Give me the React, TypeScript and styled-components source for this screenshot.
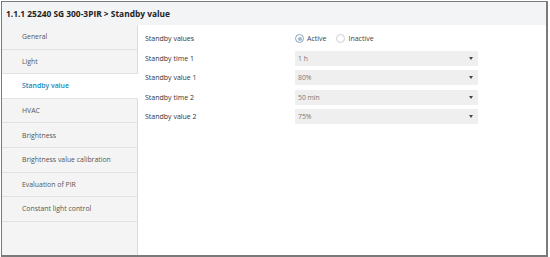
import React from "react";
import styled, { createGlobalStyle } from "styled-components";

const Global = createGlobalStyle`
  html, body { margin: 0; padding: 0; background: #ffffff; }
  body { font-family: "Open Sans", "Noto Sans", sans-serif; }
`;

const Frame = styled.div`
  box-sizing: border-box;
  width: 547px;
  height: 256px;
  margin: 1px 0 0 1px;
  border: 2px solid #7a7a7a;
  border-top-width: 1px;
  border-left-width: 1px;
  display: flex;
  flex-direction: column;
  background: #ffffff;
`;

const Header = styled.div`
  height: 23px;
  flex: none;
  background: #f3f4f5;
  display: flex;
  align-items: center;
  padding-left: 4px;
  font-size: 8.4px;
  font-weight: 700;
  color: #222;
`;

const Body = styled.div`
  flex: 1;
  display: flex;
  min-height: 0;
`;

const Sidebar = styled.div`
  width: 135px;
  flex: none;
  background: #f4f4f4;
  border-right: 1px solid #dcdcdc;
  display: flex;
  flex-direction: column;
`;

const NavItem = styled.div<{ $active?: boolean }>`
  height: 24.6px;
  box-sizing: border-box;
  border-bottom: 1px solid #e2e2e2;
  display: flex;
  align-items: center;
  padding-left: 20px;
  font-size: 6.9px;
  color: ${(p) => (p.$active ? "#1a86b8" : "#555")};
  font-weight: ${(p) => (p.$active ? 600 : 400)};
  background: ${(p) => (p.$active ? "#ffffff" : "transparent")};
  margin-right: ${(p) => (p.$active ? "-1px" : "0")};
`;

const Content = styled.div`
  flex: 1;
  padding: 6px 0 0 7px;
  display: flex;
  flex-direction: column;
  gap: 4.5px;
`;

const Row = styled.div`
  display: grid;
  grid-template-columns: 150px 183px;
  align-items: center;
  height: 15px;
`;

const Label = styled.div`
  font-size: 7px;
  color: #333;
`;

const Radios = styled.div`
  display: flex;
  align-items: center;
  gap: 10px;
  font-size: 7px;
  color: #444;
`;

const RadioOpt = styled.label`
  display: flex;
  align-items: center;
  gap: 3px;
`;

const Circle = styled.span<{ $checked?: boolean }>`
  box-sizing: border-box;
  width: 9px;
  height: 9px;
  border-radius: 50%;
  border: 1px solid ${(p) => (p.$checked ? "#8aa6c0" : "#cfcfcf")};
  background: #fff;
  display: flex;
  align-items: center;
  justify-content: center;
  &::after {
    content: "";
    width: 4px;
    height: 4px;
    border-radius: 50%;
    background: ${(p) => (p.$checked ? "#9fb8cf" : "transparent")};
  }
`;

const Select = styled.div`
  box-sizing: border-box;
  height: 15px;
  background: #efefef;
  display: flex;
  align-items: center;
  justify-content: space-between;
  padding: 0 5px 0 3px;
  font-size: 6.8px;
  color: #777;
`;

const Caret = styled.span`
  width: 0;
  height: 0;
  border-left: 2.5px solid transparent;
  border-right: 2.5px solid transparent;
  border-top: 3px solid #444;
`;

const nav = [
  "General",
  "Light",
  "Standby value",
  "HVAC",
  "Brightness",
  "Brightness value calibration",
  "Evaluation of PIR",
  "Constant light control",
];

const selects: [string, string][] = [
  ["Standby time 1", "1 h"],
  ["Standby value 1", "80%"],
  ["Standby time 2", "50 min"],
  ["Standby value 2", "75%"],
];

export default function App() {
  return (
    <>
      <Global />
      <Frame>
        <Header>1.1.1 25240 SG 300-3PIR &gt; Standby value</Header>
        <Body>
          <Sidebar>
            {nav.map((n) => (
              <NavItem key={n} $active={n === "Standby value"}>
                {n}
              </NavItem>
            ))}
          </Sidebar>
          <Content>
            <Row>
              <Label>Standby values</Label>
              <Radios>
                <RadioOpt>
                  <Circle $checked />
                  Active
                </RadioOpt>
                <RadioOpt>
                  <Circle />
                  Inactive
                </RadioOpt>
              </Radios>
            </Row>
            {selects.map(([l, v]) => (
              <Row key={l}>
                <Label>{l}</Label>
                <Select>
                  {v}
                  <Caret />
                </Select>
              </Row>
            ))}
          </Content>
        </Body>
      </Frame>
    </>
  );
}
